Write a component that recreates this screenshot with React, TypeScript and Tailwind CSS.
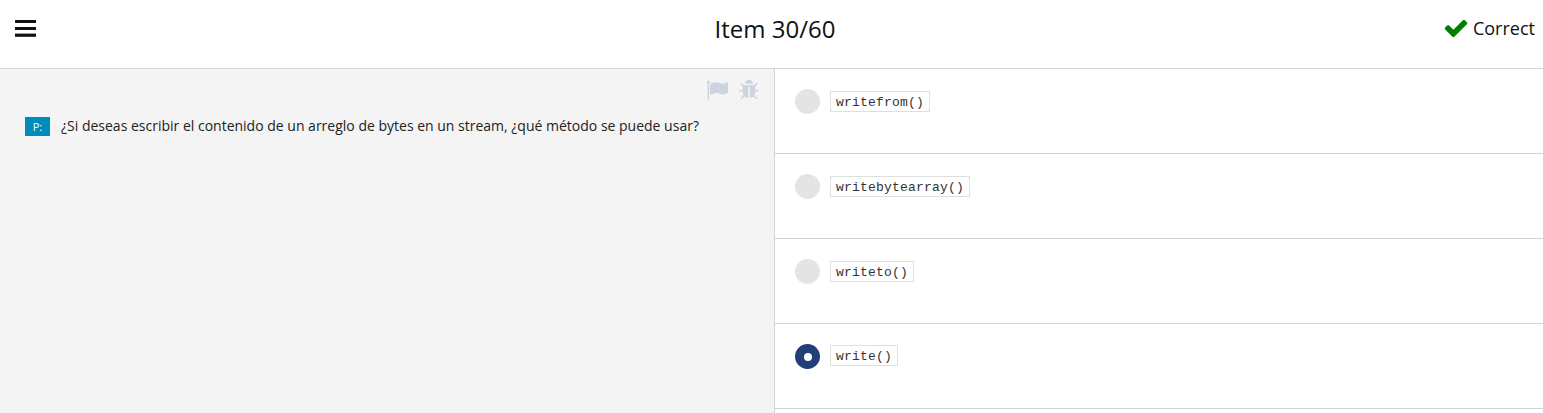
const answers = ["writefrom()", "writebytearray()", "writeto()", "write()"];

const flagPath =
  "M320 256q0 72-64 110v1266q0 13-9.5 22.5t-22.5 9.5h-64q-13 0-22.5-9.5t-9.5-22.5v-1266q-64-38-64-110 0-53 37.5-90.5t90.5-37.5 90.5 37.5 37.5 90.5zm1472 64v763q0 25-12.5 38.5t-39.5 27.5q-215 116-369 116-61 0-123.5-22t-108.5-48-115.5-48-142.5-22q-192 0-464 146-17 9-33 9-26 0-45-19t-19-45v-742q0-32 31-55 21-14 79-43 236-120 421-120 107 0 200 29t219 88q38 19 88 19 54 0 117.5-21t110-47 88-47 54.5-21q26 0 45 19t19 45z";
const bugPath =
  "M1696 960q0 26-19 45t-45 19h-224q0 171-67 290l208 209q19 19 19 45t-19 45q-18 19-45 19t-45-19l-198-197q-5 5-15 13t-42 28.5-65 36.5-82 29-97 13v-896h-128v896q-51 0-101.5-13.5t-87-33-66-39-43.5-32.5l-15-14-183 207q-20 21-48 21-24 0-43-16-19-18-20.5-44.5t15.5-46.5l202-227q-58-114-58-274h-224q-26 0-45-19t-19-45 19-45 45-19h224v-294l-173-173q-19-19-19-45t19-45 45-19 45 19l173 173h844l173-173q19-19 45-19t45 19 19 45-19 45l-173 173v294h224q26 0 45 19t19 45zm-480-576h-640q0-133 93.5-226.5t226.5-93.5 226.5 93.5 93.5 226.5z";
const checkPath =
  "M1671 566q0 40-28 68l-724 724-136 136q-28 28-68 28t-68-28l-136-136-362-362q-28-28-28-68t28-68l136-136q28-28 68-28t68 28l294 295 656-657q28-28 68-28t68 28l136 136q28 28 28 68z";

function Icon({ path, className }: { path: string; className: string }) {
  return (
    <svg viewBox="0 0 1792 1792" fill="currentColor" className={className} aria-hidden="true">
      <path d={path} />
    </svg>
  );
}

export default function App() {
  return (
    <div className="flex h-[413px] w-full flex-col overflow-hidden bg-white font-['Open_Sans',sans-serif] text-[#111]">
      <header className="grid h-[69px] shrink-0 grid-cols-3 border-b border-[#d3d3d3] pt-[5px] pr-2 pl-[15px]">
        <div className="pt-[15px]">
          <svg width="21" height="17" viewBox="0 0 21 17" fill="currentColor" aria-hidden="true">
            <rect width="21" height="3" />
            <rect y="7" width="21" height="3" />
            <rect y="13.6" width="21" height="3.2" />
          </svg>
        </div>
        <h1 className="pt-[6px] text-center text-2xl leading-[36px]">Item 30/60</h1>
        <div className="flex items-start justify-end gap-1 pt-[10px] text-lg leading-[26px]">
          <Icon path={checkPath} className="size-[26px] text-[#008000]" />
          <span>Correct</span>
        </div>
      </header>
      <main className="flex min-h-0 flex-1">
        <section className="w-[775px] shrink-0 border-r border-[#d3d3d3] bg-[#f4f4f4]">
          <div className="flex h-[47px] justify-end gap-[10px] pt-[10px] pr-[14px] text-[#cdd4e0]">
            <Icon path={flagPath} className="size-[22px]" />
            <Icon path={bugPath} className="size-[22px]" />
          </div>
          <div className="flex items-start pl-[25px]">
            <span className="mt-px h-[19px] w-[25px] bg-[#008cba] text-center text-[11px] leading-[20px] text-white">P:</span>
            <p className="ml-[11px] text-sm leading-5 text-[#222]">¿Si deseas escribir el contenido de un arreglo de bytes en un stream, ¿qué método se puede usar?</p>
          </div>
        </section>
        <section className="flex-1">
          {answers.map((answer, i) => (
            <div key={answer} className="flex h-[85px] items-start gap-[10px] border-b border-[#d3d3d3] pt-5 pl-5">
              <span className={i === 3 ? "flex size-[25px] items-center justify-center rounded-full bg-[#204077]" : "size-[25px] rounded-full bg-[#e4e4e4]"}>
                {i === 3 && <span className="size-2 rounded-full bg-white" />}
              </span>
              <code className={`${i === 3 ? "mt-px" : "mt-[2px]"} h-[21px] border border-[#dfdfdf] px-[5px] font-['Liberation_Mono',monospace] text-[13px] leading-[21px] tracking-[0.199px] text-[#333]`}>{answer}</code>
            </div>
          ))}
        </section>
      </main>
    </div>
  );
}
